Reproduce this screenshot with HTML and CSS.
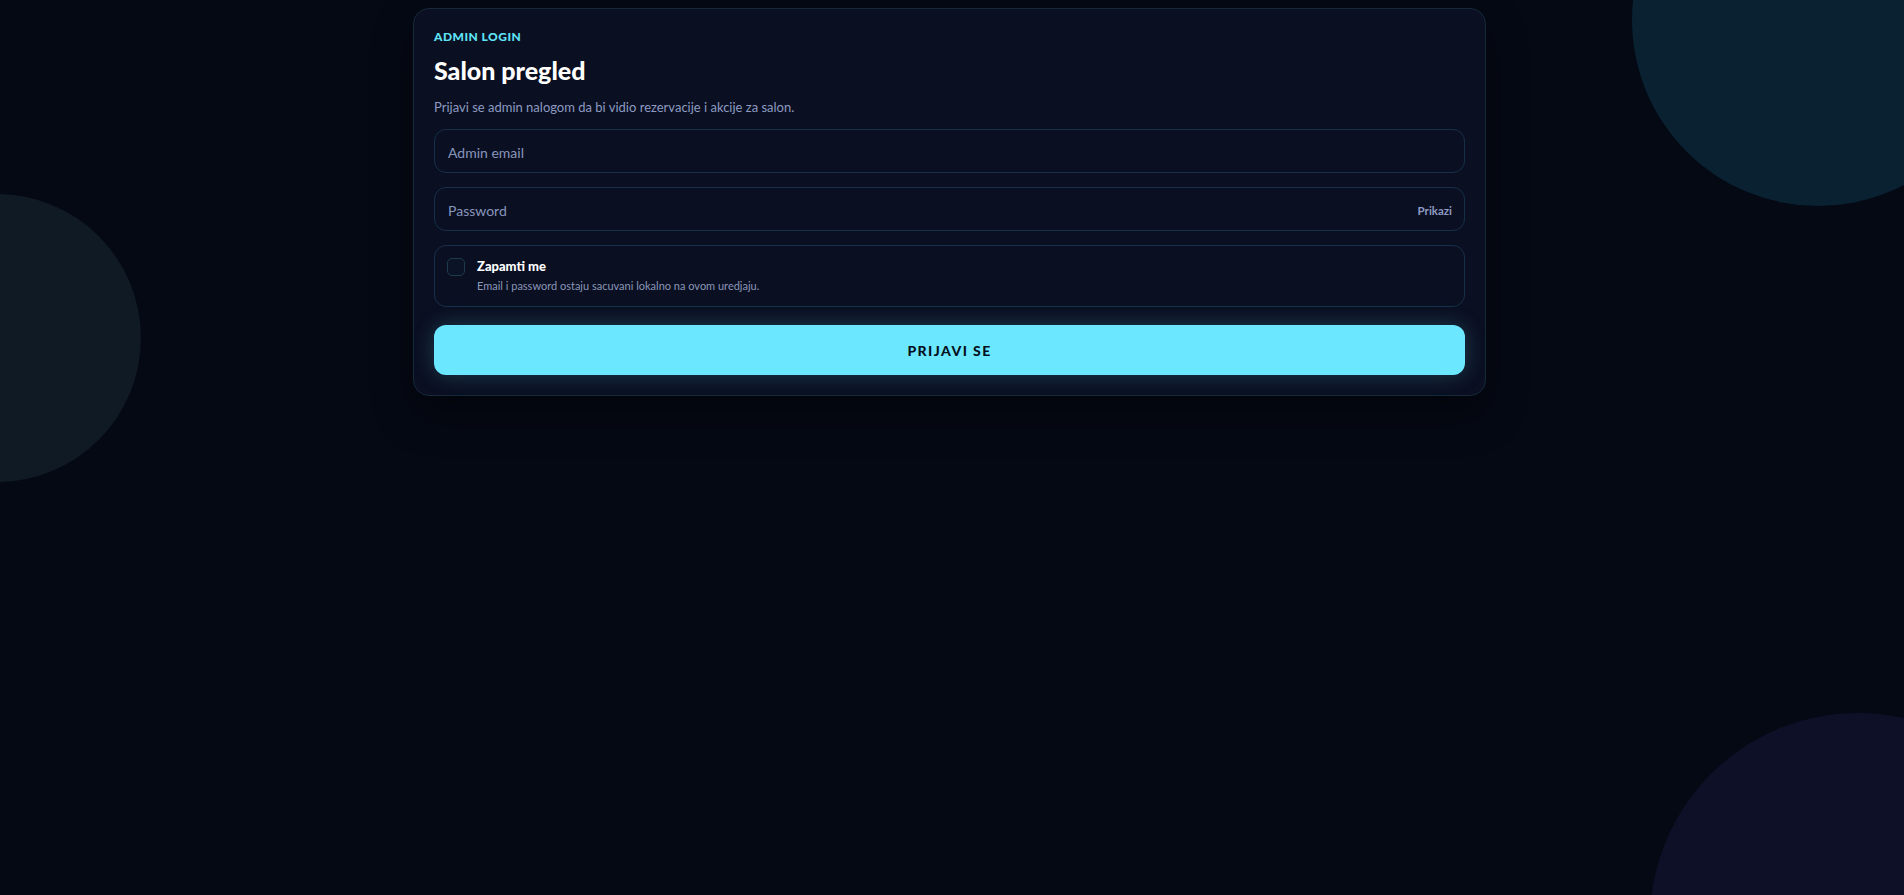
FILE: index.html
```html
<!DOCTYPE html>
<html lang="sr">
<head>
<meta charset="utf-8">
<title>Admin login</title>
<link rel="stylesheet" href="styles.css">
</head>
<body>
<div class="scene">
  <div class="blob blob-left"></div>
  <div class="blob blob-top"></div>
  <div class="blob blob-bottom"></div>
  <main class="page">
    <section class="card">
      <div class="eyebrow">ADMIN LOGIN</div>
      <h1 class="title">Salon pregled</h1>
      <p class="subtitle">Prijavi se admin nalogom da bi vidio rezervacije i akcije za salon.</p>
      <form class="form">
        <div class="field">
          <input class="input" type="email" placeholder="Admin email">
        </div>
        <div class="field">
          <input class="input" type="password" placeholder="Password">
          <button type="button" class="show-btn">Prikazi</button>
        </div>
        <label class="remember">
          <span class="checkbox"></span>
          <span class="remember-text">
            <span class="remember-title">Zapamti me</span>
            <span class="remember-desc">Email i password ostaju sacuvani lokalno na ovom uredjaju.</span>
          </span>
        </label>
        <button type="button" class="submit">PRIJAVI SE</button>
      </form>
    </section>
  </main>
</div>
</body>
</html>
```
FILE: styles.css
```css
* { box-sizing: border-box; }
html, body { margin: 0; padding: 0; overflow: hidden; }
body {
  background: #050914;
  font-family: "Lato", "Noto Sans", sans-serif;
  color: #ffffff;
}
.scene {
  position: relative;
  height: 895px;
  overflow: hidden;
}
.blob {
  position: absolute;
  border-radius: 50%;
  z-index: 0;
}
.blob-left {
  width: 288px; height: 288px;
  left: -147px; top: 194px;
  background: #101a24;
}
.blob-top {
  width: 372px; height: 372px;
  right: -100px; top: -166px;
  background: #092131;
}
.blob-bottom {
  width: 416px; height: 416px;
  right: -162px; top: 713px;
  background: #0d1027;
}
.page {
  position: relative;
  z-index: 1;
  display: flex;
  justify-content: center;
  padding: 8px 5px 0 0;
}
.card {
  width: 1073px;
  background: #0a0f21;
  border: 1px solid #15293a;
  border-radius: 16px;
  padding: 20px;
  box-shadow: 0 18px 40px rgba(0, 0, 0, 0.45);
}
.eyebrow {
  font-size: 12px;
  line-height: 16px;
  font-weight: 900;
  letter-spacing: 0.04em;
  color: #5fe3f7;
}
.title {
  margin: 10px 0 0;
  font-size: 25px;
  line-height: 30px;
  font-weight: 900;
  color: #ffffff;
}
.subtitle {
  margin: 12px 0 0;
  font-size: 13px;
  line-height: 20px;
  color: #8d9bc2;
}
.form {
  margin-top: 12px;
  display: flex;
  flex-direction: column;
  gap: 14px;
}
.field {
  height: 44px;
  border: 1px solid #17304a;
  border-radius: 12px;
  background: #0a1022;
  display: flex;
  align-items: center;
  padding: 2px 12px 0 13px;
}
.input {
  flex: 1;
  background: transparent;
  border: 0;
  outline: none;
  font-family: inherit;
  font-size: 14px;
  color: #ffffff;
  padding: 0;
}
.input::placeholder { color: #8895bd; }
.show-btn {
  background: transparent;
  border: 0;
  padding: 0;
  font-family: inherit;
  font-size: 11.5px;
  font-weight: 700;
  color: #8e9ac2;
}
.remember {
  display: flex;
  align-items: flex-start;
  gap: 12px;
  padding: 11px 12px 12px;
  border: 1px solid #17304a;
  border-radius: 12px;
  background: #0a1022;
}
.checkbox {
  width: 18px; height: 18px;
  margin-top: 1px;
  border: 1px solid #1e3a4c;
  border-radius: 5px;
  background: #0a1426;
  flex: none;
}
.remember-text {
  display: flex;
  flex-direction: column;
  gap: 3px;
}
.remember-title {
  font-size: 13px;
  line-height: 18px;
  font-weight: 900;
  color: #ffffff;
}
.remember-desc {
  font-size: 11px;
  line-height: 16px;
  color: #8b96b8;
}
.submit {
  margin-top: 4px;
  height: 50px;
  border: 0;
  border-radius: 12px;
  background: #6be8ff;
  font-family: inherit;
  font-size: 14px;
  font-weight: 900;
  letter-spacing: 0.1em;
  color: #04111c;
  box-shadow: 0 0 22px rgba(107, 232, 255, 0.22);
}
```
